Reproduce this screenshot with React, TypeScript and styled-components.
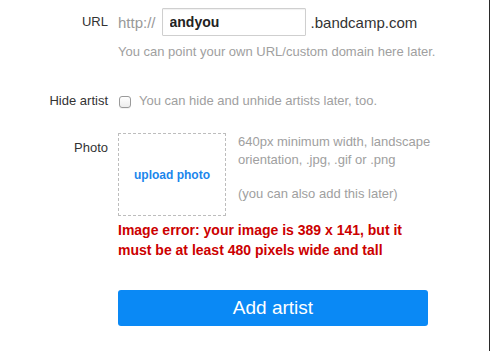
import React from "react";
import styled, { createGlobalStyle } from "styled-components";

const Global = createGlobalStyle`
  html, body { margin: 0; padding: 0; background: #fff; }
  body { font-family: "Liberation Sans", Arial, sans-serif; }
`;

const Page = styled.div`
  width: 490px;
  height: 351px;
  box-sizing: border-box;
  border-right: 1px solid #2a2a2a;
  padding-top: 8px;
  background: #fff;
`;

const Row = styled.div<{ $mt?: number; $align?: string }>`
  display: grid;
  grid-template-columns: 108px 1fr;
  column-gap: 10px;
  align-items: ${(p) => p.$align || "center"};
  margin-top: ${(p) => p.$mt || 0}px;
`;

const Label = styled.div<{ $pt?: number }>`
  text-align: right;
  font-size: 13px;
  line-height: 18px;
  color: #333;
  padding-top: ${(p) => p.$pt || 0}px;
`;

const Field = styled.div`
  display: flex;
  align-items: center;
`;

const Prefix = styled.span`
  font-size: 15px;
  color: #999;
  margin-right: 6px;
`;

const Suffix = styled.span`
  font-size: 15px;
  color: #333;
  margin-left: 5px;
`;

const TextInput = styled.input`
  box-sizing: border-box;
  width: 144px;
  height: 28px;
  border: 1px solid #cfcfcf;
  border-radius: 1px;
  padding: 0 7px;
  font-family: "Liberation Sans", Arial, sans-serif;
  font-size: 14px;
  font-weight: bold;
  color: #222;
  outline: none;
  box-shadow: inset 0 1px 1px rgba(0, 0, 0, 0.06);
`;

const Hint = styled.div<{ $mt?: number }>`
  font-size: 13px;
  line-height: 16px;
  color: #a0a0a0;
  margin-top: ${(p) => p.$mt || 0}px;
`;

const CheckLine = styled.label`
  display: flex;
  align-items: center;
  gap: 8px;
  font-size: 13px;
  line-height: 16px;
  color: #a0a0a0;
`;

const Check = styled.input`
  appearance: none;
  -webkit-appearance: none;
  margin: 2px 0 0 1px;
  width: 12px;
  height: 12px;
  border: 1px solid #9a9a9a;
  border-radius: 3px;
  background: linear-gradient(#fff, #ececec);
  box-shadow: 0 1px 0 rgba(0, 0, 0, 0.05);
`;

const PhotoArea = styled.div`
  display: flex;
  gap: 12px;
  align-items: flex-start;
`;

const UploadBox = styled.div`
  box-sizing: border-box;
  flex: 0 0 108px;
  width: 108px;
  height: 83px;
  border: 1px dashed #bdbdbd;
  display: flex;
  align-items: center;
  justify-content: center;
  font-size: 12px;
  font-weight: bold;
  color: #1b86ec;
`;

const PhotoNotes = styled.div`
  width: 205px;
  font-size: 13px;
  line-height: 18px;
  color: #a0a0a0;
`;

const Note = styled.p<{ $mt?: number }>`
  margin: ${(p) => p.$mt || 0}px 0 0;
`;

const ErrorText = styled.div`
  margin-top: 4px;
  font-size: 14px;
  line-height: 20px;
  font-weight: bold;
  color: #cc0000;
  width: 300px;
`;

const Button = styled.button`
  margin-top: 30px;
  width: 310px;
  height: 36px;
  border: none;
  border-radius: 3px;
  background: #0a89f5;
  color: #fff;
  font-family: "Liberation Sans", Arial, sans-serif;
  font-size: 19px;
  cursor: pointer;
`;

const Col = styled.div`
  display: flex;
  flex-direction: column;
  align-items: flex-start;
`;

export default function App() {
  return (
    <>
      <Global />
      <Page>
        <Row>
          <Label>URL</Label>
          <Field>
            <Prefix>http://</Prefix>
            <TextInput defaultValue="andyou" />
            <Suffix>.bandcamp.com</Suffix>
          </Field>
        </Row>
        <Row>
          <div />
          <Hint $mt={8}>You can point your own URL/custom domain here later.</Hint>
        </Row>
        <Row $mt={32}>
          <Label>Hide artist</Label>
          <CheckLine>
            <Check type="checkbox" />
            You can hide and unhide artists later, too.
          </CheckLine>
        </Row>
        <Row $mt={23} $align="start">
          <Label $pt={6}>Photo</Label>
          <Col>
            <PhotoArea>
              <UploadBox>upload photo</UploadBox>
              <PhotoNotes>
                <Note>640px minimum width, landscape orientation, .jpg, .gif or .png</Note>
                <Note $mt={16}>(you can also add this later)</Note>
              </PhotoNotes>
            </PhotoArea>
            <ErrorText>
              Image error: your image is 389 x 141, but it must be at least 480 pixels wide and tall
            </ErrorText>
            <Button>Add artist</Button>
          </Col>
        </Row>
      </Page>
    </>
  );
}
